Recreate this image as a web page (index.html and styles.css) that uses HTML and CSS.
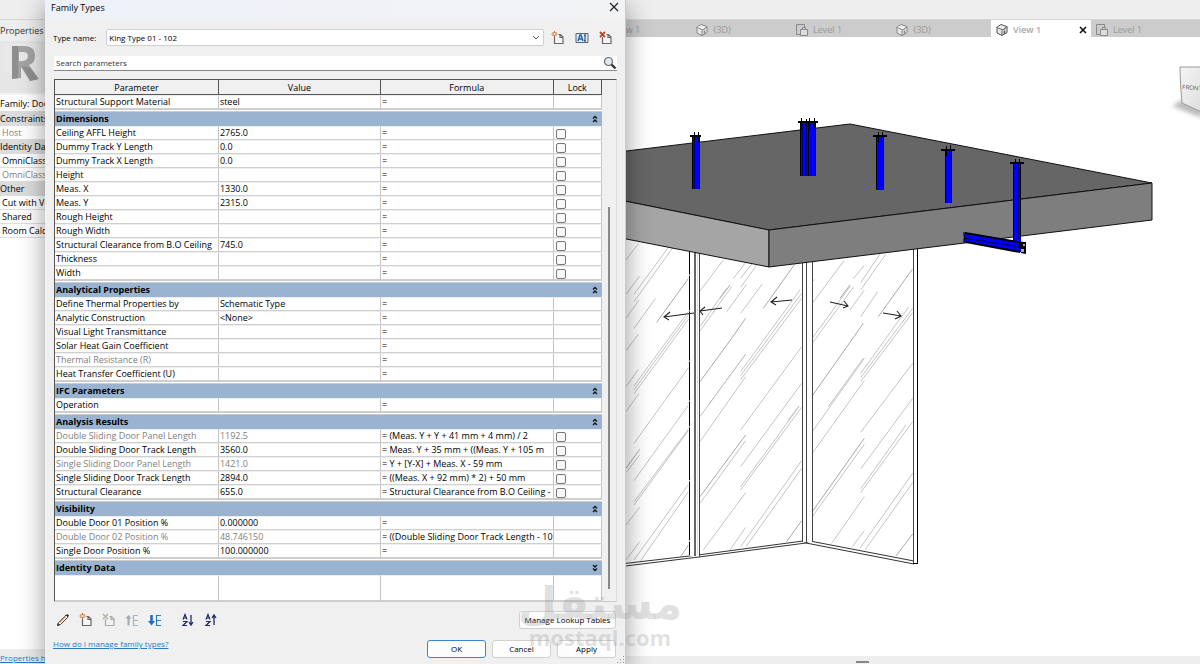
FILE: index.html
```html
<!DOCTYPE html>
<html lang="en">
<head>
<meta charset="utf-8">
<title>Family Types</title>
<link rel="stylesheet" href="styles.css">
</head>
<body>
<svg class="defs" aria-hidden="true">
  <symbol id="up" viewBox="0 0 6 8"><path d="M1 3.5 3 1.5 5 3.5M1 7 3 5 5 7" fill="none" stroke="#111" stroke-width="1.3"/></symbol>
  <symbol id="down" viewBox="0 0 6 8"><path d="M1 1 3 3 5 1M1 4.500 3 6.500 5 4.500" fill="none" stroke="#111" stroke-width="1.3"/></symbol>
  <symbol id="page" viewBox="0 0 14 14"><path d="M3.500 6v6.500h8.500V6L9.500 3.500H7.500M9 3.500V6.500h3" fill="#f6f6f6" stroke="#666" stroke-width="1.2"/></symbol>
  <symbol id="house" viewBox="0 0 14 14"><path d="M1.500 4.500 6 1.500l6 2-4 3.500-6.500-2.500z" fill="#eee" stroke="currentColor"/><path d="M2 5v5l5 2.500V7.500M7 12.500l5-3V3.500L8.500 7" fill="#e8e8e8" stroke="currentColor"/><path d="M9.500 7.500v3.500" stroke="currentColor" stroke-width="1.500"/></symbol>
  <symbol id="plan" viewBox="0 0 14 14"><path d="M1.500 1.500h8v3M1.500 1.500v10h4" fill="none" stroke="currentColor"/><path d="M5.500 6.500h7v6h-7zM7.500 6.500V4.500h3v2" fill="#ddd" stroke="currentColor"/></symbol>
</svg>
<div class="app">
  <header class="ribbon"></header>
  <div class="work">
    <aside class="props">
      <h2 class="props-title">Properties</h2>
      <div class="preview">
        <svg width="48" height="44" viewBox="0 0 48 44" aria-hidden="true"><path d="M4 0h36v28H4z" fill="#e9e9e9"/><path fill-rule="evenodd" d="M12 2h12q11 0 11 10 0 7-6 9l10 14-9 2-9-14v11l-9 1zM19 8v9q9 1 9-5 0-4-5-4z" fill="#a3a3a3"/><path d="M12 2h6v32l-6 1zM22 22l8 15 8-2-8-11z" fill="#8f8f8f"/></svg>
      </div>
      <div class="p-row p-family">Family: Door</div>
      <div class="p-row p-head">Constraints</div>
      <div class="p-row p-item muted">Host</div>
      <div class="p-row p-head">Identity Data</div>
      <div class="p-row p-item">OmniClass Number</div>
      <div class="p-row p-item muted">OmniClass Title</div>
      <div class="p-row p-head">Other</div>
      <div class="p-row p-item">Cut with Voids</div>
      <div class="p-row p-item">Shared</div>
      <div class="p-row p-item">Room Calculation</div>
      <div class="p-space"></div>
      <div class="p-help"><a href="#">Properties help</a></div>
    </aside>
    <main class="view">
      <nav class="tabs">
        <a class="tab" href="#"><svg class="i14"><use href="#house"/></svg>View 1</a>
        <a class="tab" href="#"><svg class="i14"><use href="#house"/></svg>{3D}</a>
        <a class="tab" href="#"><svg class="i14"><use href="#plan"/></svg>Level 1</a>
        <a class="tab" href="#"><svg class="i14"><use href="#house"/></svg>{3D}</a>
        <div class="tab active"><svg class="i14"><use href="#house"/></svg>View 1<button class="tab-x" aria-label="Close view"><svg width="8" height="8" viewBox="0 0 8 8"><path d="M1 1l6 6M7 1 1 7" stroke="#111" stroke-width="1.600"/></svg></button></div>
        <a class="tab" href="#"><svg class="i14"><use href="#plan"/></svg>Level 1</a>
      </nav>
      <svg class="scene" viewBox="91 37 1109 619" role="img" aria-label="3D view of sliding doors below a slab">
        <g class="hatch" transform="translate(620 230) scale(.3333)">
          <path d="M18 90 56 40M18 193 59 138M42 193 143 55M42 215 157 55M18 265 57 210M42 295 106 206M18 362 56 312M18 470 56 418M42 468 205 245M42 480 205 256M42 492 205 268"/>
          <path d="M240 183 310 90M240 290 320 175M240 303 335 170M340 146 375 100M362 145 397 100M362 172 410 106M320 245 380 163M362 250 427 162M265 525 377 373M362 425 540 180M362 437 545 190M362 449 545 205M505 570 537 528"/>
          <path d="M577 220 672 92M577 325 690 170M577 340 700 172M700 146 733 106M722 158 780 72M722 180 798 72M690 240 733 180M722 260 773 185M625 530 730 385M722 430 865 232M722 443 878 235M722 455 878 248M577 155 583 148"/>
          <path class="dark" d="M110 277 205 146M430 235 524 103M240 455 335 325M335 325 377 265M775 260 877 118M577 497 695 330M695 330 730 280M300 205 330 165M660 205 690 165"/>
        </g>
        <g class="hatch" transform="translate(620 400) scale(.3333)">
          <path d="M42 130 205-96M42 242 205 16M18 35 57-20M18 218 59 165M42 305 205 88M42 315 205 92M18 375 59 322M18 480 59 425M42 480 205 254M62 482 205 276"/>
          <path d="M240 50 377-138M240 125 377-70M362 90 545-160M362 200 545-50M362 260 537 20M362 270 545 22M240 310 377 122M250 450 377 278M330 450 377 382M362 440 545 182M378 440 545 205"/>
          <path d="M577 95 733-125M577 160 733-58M722 97 878-110M722 207 878-5M722 267 858 75M722 278 878 65M577 350 733 133M635 430 733 290M697 440 733 392M720 445 878 220M735 450 878 248"/>
          <path class="dark" d="M18 205 59 148M182 470 205 436M240 290 377 105M500 425 545 362M577 335 733 115M828 468 878 402"/>
        </g>
        <g fill="#fff" stroke="#333">
          <path d="M560 571 698 555 803 541 806 543 699 557 560 574z"/>
          <path d="M810 541 914 561 914 564 806 543z"/>
        </g>
        <g shape-rendering="crispEdges">
          <path d="M690 245h9v311h-9zM802 245h10v297h-10zM913 240h5v323h-5z" fill="#fff"/>
          <path d="M689.500 245v310" stroke="#000"/>
          <path d="M694.500 245v311" stroke="#666" stroke-width="2"/>
          <path d="M699.500 245v312M802.500 245v297M806.500 245v297M812.500 245v297M913.500 240v323" stroke="#444"/>
          <path d="M697.500 245v310" stroke="#ddd"/>
          <path d="M917.500 240v324" stroke="#000"/>
          <path d="M913 563.500h5" stroke="#000"/>
        </g>
        <path class="seam" d="M687 278 694 270M687 314 694 305M687 364 694 356M687 404 694 396M687 430 694 421M687 484 694 475M687 545 694 534"/>
        <g fill="none" stroke="#222" stroke-width="1.100">
          <path d="M664 317 694 313M670 312 664 317 669 320M700 311 722 308M705 307 700 311 703 315"/>
          <path d="M771 302 792 300M777 297 771 302 776 305M830 302 848 306M844 301 848 306 843 308M883 313 901 316M897 311 901 316 895 319"/>
        </g>
        <g stroke="#111" stroke-linejoin="round">
          <path d="M560 159 850 124 1152 183 769 230 560 188z" fill="#666"/>
          <path d="M560 188 769 230V267L560 226z" fill="#a5a5a5"/>
          <path d="M769 230 1152 183V220L769 267z" fill="#7e7e7e"/>
        </g>
        <g shape-rendering="crispEdges">
          <path d="M692 136h8v53h-8zM800 122h16v54h-16zM876 135h8v55h-8zM945 149h7v54h-7zM1013 163h8v79h-8z" fill="#00f"/>
          <path d="M692.500 135v54M699.500 137v52M800.500 122v54M808.500 122v54M815.500 122v54M876.500 136v53M883.500 136v53M945.500 149v54M951.500 149v54M1013.500 163v78M1020.500 163v74" stroke="#000"/>
          <path d="M694.500 137v52M802.500 122v54M806.500 128v48M811.500 128v48M813.500 124v52M881.500 136v53M949.500 149v54M1018.500 163v76" stroke="#000070"/>
          <path d="M690 136h11M798 122h20M873 136h14M941 150h14M1010 163h14" stroke="#000" stroke-width="2"/>
          <path d="M694.500 132v10M698.500 132v10M801.500 118v12M806.500 119v10M809.500 118v12M814.500 118v10M878.500 132v10M882.500 132v5M946.500 146v10M950.500 145v6M1015.500 159v10M1019.500 159v5" stroke="#000"/>
        </g>
        <path d="M964 233 1024 243 1026 253 964 242z" fill="#00f"/>
        <path d="M965 233 1024 243M966 242 1020 252" stroke="#000" stroke-width="2"/>
        <path d="M964 238 1020 247M964 232v11" stroke="#000" stroke-dasharray="5 1"/>
        <path d="M1019 242h7v12l-5-1z" fill="#000"/>
        <path d="M1021 249h3v3h-3zM1023 244h2v2h-2z" fill="#aaa"/>
        <defs><linearGradient id="cube" x2="1" y2="1"><stop stop-color="#f4f4f4"/><stop offset="1" stop-color="#ddd"/></linearGradient><filter id="soft"><feGaussianBlur stdDeviation="2"/></filter></defs>
        <path d="M1172 106 1202 118V108L1182 100z" fill="#bbb" filter="url(#soft)"/>
        <path d="M1180 67h24v46l-22-10q-2-18-2-36z" fill="url(#cube)" stroke="#999"/>
        <text class="cube-text" x="1182" y="89" transform="rotate(5 1182 89)">FRONT</text>
      </svg>
      <footer class="status"><span class="grab"></span></footer>
    </main>
  </div>

  <section class="dialog" role="dialog" aria-labelledby="dlg-title">
    <header class="titlebar"><h1 id="dlg-title">Family Types</h1>
      <button class="icon-btn" aria-label="Close"><svg width="10" height="10" viewBox="0 0 10 10"><path d="M1 1l8 8M9 1 1 9" stroke="#222" stroke-width="1.200"/></svg></button>
    </header>
    <div class="type-row">
      <label for="type">Type name:</label>
      <div class="select-wrap"><select id="type"><option>King Type 01 - 102</option></select><svg class="caret" width="8" height="5" viewBox="0 0 8 5" aria-hidden="true"><path d="M1 1l3 3 3-3" fill="none" stroke="#555"/></svg></div>
      <div class="type-tools">
        <button class="icon-btn" aria-label="New type"><svg class="i14"><use href="#page"/><g stroke="#c8692b"><path d="M3.500 0v6M.5 3h6M1.500 1l4 4M5.500 1l-4 4"/><circle cx="3.500" cy="3" r="1" fill="#fff" stroke="none"/></g></svg></button>
        <button class="icon-btn" aria-label="Rename type"><svg class="i14" viewBox="0 0 14 14"><path d="M1 2.500h12v9H1z" fill="#dceaf8" stroke="#567"/><path d="M3 10 5 4h1l2 6M4 8h3" fill="none" stroke="#1a62b8" stroke-width="1.400"/><path d="M10 4v6M9 4h2M9 10h2" stroke="#333"/></svg></button>
        <button class="icon-btn" aria-label="Delete type"><svg class="i14"><use href="#page"/><path d="M1 1l5 5M6 1 1 6" stroke="#b9472c" stroke-width="1.800"/></svg></button>
      </div>
    </div>
    <div class="search"><input type="text" placeholder="Search parameters" aria-label="Search parameters">
      <svg width="14" height="14" viewBox="0 0 14 14" aria-hidden="true"><circle cx="5.500" cy="5.500" r="4" fill="#dfeaf0" stroke="#666" stroke-width="1.200"/><path d="M8.500 8.500 12.500 12.500" stroke="#333" stroke-width="2.400"/></svg>
    </div>
    <div class="frame">
      <table class="grid">
        <colgroup><col class="c1"><col class="c2"><col><col class="c4"></colgroup>
        <thead><tr><th>Parameter</th><th>Value</th><th>Formula</th><th>Lock</th></tr></thead>
        <tbody>
          <tr><td>Structural Support Material</td><td>steel</td><td>=</td><td></td></tr>
          <tr class="group"><th colspan="4"><div>Dimensions<button aria-label="Collapse Dimensions"><svg><use href="#up"/></svg></button></div></th></tr>
          <tr><td>Ceiling AFFL Height</td><td>2765.0</td><td>=</td><td><input type="checkbox" aria-label="Lock Ceiling AFFL Height"></td></tr>
          <tr><td>Dummy Track Y Length</td><td>0.0</td><td>=</td><td><input type="checkbox" aria-label="Lock Dummy Track Y Length"></td></tr>
          <tr><td>Dummy Track X Length</td><td>0.0</td><td>=</td><td><input type="checkbox" aria-label="Lock Dummy Track X Length"></td></tr>
          <tr><td>Height</td><td></td><td>=</td><td><input type="checkbox" aria-label="Lock Height"></td></tr>
          <tr><td>Meas. X</td><td>1330.0</td><td>=</td><td><input type="checkbox" aria-label="Lock Meas. X"></td></tr>
          <tr><td>Meas. Y</td><td>2315.0</td><td>=</td><td><input type="checkbox" aria-label="Lock Meas. Y"></td></tr>
          <tr><td>Rough Height</td><td></td><td>=</td><td><input type="checkbox" aria-label="Lock Rough Height"></td></tr>
          <tr><td>Rough Width</td><td></td><td>=</td><td><input type="checkbox" aria-label="Lock Rough Width"></td></tr>
          <tr><td>Structural Clearance from B.O Ceiling</td><td>745.0</td><td>=</td><td><input type="checkbox" aria-label="Lock Structural Clearance from B.O Ceiling"></td></tr>
          <tr><td>Thickness</td><td></td><td>=</td><td><input type="checkbox" aria-label="Lock Thickness"></td></tr>
          <tr><td>Width</td><td></td><td>=</td><td><input type="checkbox" aria-label="Lock Width"></td></tr>
          <tr class="group"><th colspan="4"><div>Analytical Properties<button aria-label="Collapse Analytical Properties"><svg><use href="#up"/></svg></button></div></th></tr>
          <tr><td>Define Thermal Properties by</td><td>Schematic Type</td><td>=</td><td></td></tr>
          <tr><td>Analytic Construction</td><td>&lt;None&gt;</td><td>=</td><td></td></tr>
          <tr><td>Visual Light Transmittance</td><td></td><td>=</td><td></td></tr>
          <tr><td>Solar Heat Gain Coefficient</td><td></td><td>=</td><td></td></tr>
          <tr><td class="muted">Thermal Resistance (R)</td><td></td><td>=</td><td></td></tr>
          <tr><td>Heat Transfer Coefficient (U)</td><td></td><td>=</td><td></td></tr>
          <tr class="group"><th colspan="4"><div>IFC Parameters<button aria-label="Collapse IFC Parameters"><svg><use href="#up"/></svg></button></div></th></tr>
          <tr><td>Operation</td><td></td><td>=</td><td></td></tr>
          <tr class="group"><th colspan="4"><div>Analysis Results<button aria-label="Collapse Analysis Results"><svg><use href="#up"/></svg></button></div></th></tr>
          <tr><td class="muted">Double Sliding Door Panel Length</td><td class="muted">1192.5</td><td>= (Meas. Y + Y + 41 mm + 4 mm) / 2</td><td><input type="checkbox" aria-label="Lock Double Sliding Door Panel Length"></td></tr>
          <tr><td>Double Sliding Door Track Length</td><td>3560.0</td><td>= Meas. Y + 35 mm + ((Meas. Y + 105 m</td><td><input type="checkbox" aria-label="Lock Double Sliding Door Track Length"></td></tr>
          <tr><td class="muted">Single Sliding Door Panel Length</td><td class="muted">1421.0</td><td>= Y + [Y-X] + Meas. X - 59 mm</td><td><input type="checkbox" aria-label="Lock Single Sliding Door Panel Length"></td></tr>
          <tr><td>Single Sliding Door Track Length</td><td>2894.0</td><td>= ((Meas. X + 92 mm) * 2) + 50 mm</td><td><input type="checkbox" aria-label="Lock Single Sliding Door Track Length"></td></tr>
          <tr><td>Structural Clearance</td><td>655.0</td><td>= Structural Clearance from B.O Ceiling -</td><td><input type="checkbox" aria-label="Lock Structural Clearance"></td></tr>
          <tr class="group"><th colspan="4"><div>Visibility<button aria-label="Collapse Visibility"><svg><use href="#up"/></svg></button></div></th></tr>
          <tr><td>Double Door 01 Position %</td><td>0.000000</td><td>=</td><td></td></tr>
          <tr><td class="muted">Double Door 02 Position %</td><td class="muted">48.746150</td><td>= ((Double Sliding Door Track Length - 10</td><td></td></tr>
          <tr><td>Single Door Position %</td><td>100.000000</td><td>=</td><td></td></tr>
          <tr class="group"><th colspan="4"><div>Identity Data<button aria-label="Expand Identity Data"><svg><use href="#down"/></svg></button></div></th></tr>
          <tr class="blank"><td></td><td></td><td></td><td></td></tr>
        </tbody>
      </table>
      <div class="scroll"><div class="thumb"></div></div>
    </div>
    <div class="tools">
      <button class="icon-btn" aria-label="Edit parameter"><svg class="i14" viewBox="0 0 14 14"><path d="M1.500 12.500 2.500 9.500 10 2l2 2-7.500 7.500z" fill="#fff" stroke="#444"/><path d="M3.500 9.500 9.500 3.500" stroke="#d98a4e" stroke-width="1.500"/><path d="M1 13l1-3 2 2zM10 2l2 2 1-1.500L11.500 1z" fill="#333"/></svg></button>
      <button class="icon-btn" aria-label="New parameter"><svg class="i14"><use href="#page"/><g stroke="#c8692b"><path d="M3.500 0v6M.5 3h6M1.500 1l4 4M5.500 1l-4 4"/><circle cx="3.500" cy="3" r="1" fill="#fff" stroke="none"/></g></svg></button>
      <button class="icon-btn faded" aria-label="Delete parameter"><svg class="i14"><use href="#page"/><path d="M1 1l5 5M6 1 1 6" stroke="#875" stroke-width="1.600"/></svg></button>
      <button class="icon-btn faded" aria-label="Move up"><svg class="i14" viewBox="0 0 14 14"><path d="M3.500 12.500V4" stroke="#567" stroke-width="2"/><path d="M.5 5.500 3.500 2l3 3.500z" fill="#567"/><path d="M13 2.500H8.500v10H13M8.500 7.500H13" fill="none" stroke="#48a" stroke-width="1.200"/></svg></button>
      <button class="icon-btn" aria-label="Move down"><svg class="i14" viewBox="0 0 14 14"><path d="M3.500 2v7" stroke="#2a6db5" stroke-width="2.600"/><path d="M0 8h7L3.500 12.500z" fill="#2a6db5"/><path d="M13 2.500H8.500v10H13M8.500 7.500H13" fill="none" stroke="#2f7dca" stroke-width="1.200"/></svg></button>
      <button class="icon-btn sort" aria-label="Sort ascending"><svg class="i14" viewBox="0 0 14 14"><path d="M2 6.500 4 1.500l2 5M2.500 5h3M2 8.500h4l-4 4h4" fill="none" stroke="#1d2b66" stroke-width="1.200"/><path d="M10 2v9M8 9l2 3 2-3" fill="none" stroke="#1d2b66" stroke-width="1.300"/></svg></button>
      <button class="icon-btn" aria-label="Sort descending"><svg class="i14" viewBox="0 0 14 14"><path d="M2 6.500 4 1.500l2 5M2.500 5h3M2 8.500h4l-4 4h4" fill="none" stroke="#1d2b66" stroke-width="1.200"/><path d="M10 12V3M8 5l2-3 2 3" fill="none" stroke="#1d2b66" stroke-width="1.300"/></svg></button>
      <button class="btn lookup">Manage Lookup Tables</button>
    </div>
    <footer class="actions">
      <a href="#">How do I manage family types?</a>
      <button class="btn primary">OK</button>
      <button class="btn">Cancel</button>
      <button class="btn">Apply</button>
    </footer>
    <svg class="grip" width="8" height="8" viewBox="0 0 8 8" aria-hidden="true"><path d="M6 0h1v1H6zM3 3h1v1H3zM6 3h1v1H6zM0 6h1v1H0zM3 6h1v1H3zM6 6h1v1H6z" fill="#999"/></svg>
  </section>
  <div class="mark" aria-hidden="true"><span class="mark-ar" lang="ar" dir="rtl">مستقل</span><span class="mark-en">mostaql.com</span></div>
</div>
</body>
</html>
```
FILE: styles.css
```css
* { box-sizing: border-box; }
body { margin: 0; font: 9px/14px "Open Sans", "Noto Sans", sans-serif; color: #000; }
h1, h2 { margin: 0; font: inherit; }
button, input, select { font: inherit; color: inherit; margin: 0; padding: 0; }
a { color: #2a7ac6; }
.defs { position: absolute; width: 0; height: 0; }
.i14 { width: 14px; height: 14px; flex: none; display: block; }
.muted { color: #808080; }

.app { position: relative; display: flex; flex-direction: column; height: 100vh; overflow: hidden; background: #eee; }
.ribbon { height: 20px; background: #eee; border-bottom: 1px solid #d4d4d4; flex: none; }
.work { flex: 1; display: flex; min-height: 0; }

.props { width: 91px; flex: none; display: flex; flex-direction: column; background: #eee; white-space: nowrap; overflow: hidden; }
.props-title { height: 21px; line-height: 21px; color: #333; }
.preview { height: 54px; padding-top: 3px; background: #e6e6e6; border-bottom: 2px solid #f4f4f4; }
.p-row { height: 14px; line-height: 14px; background: #fff; border-bottom: 1px solid #ddd; }
.p-family { height: 17px; line-height: 17px; }
.p-head { background: #dcdcdc; }
.p-item { padding-left: 2px; }
.p-space { flex: 1; background: #fff; }
.p-help { height: 15px; line-height: 18px; font-size: 8px; background: #ececec; }

.view { flex: 1; min-width: 0; display: flex; flex-direction: column; background: #fff; }
.tabs { display: flex; height: 17px; padding-left: 500px; background: #ccc; flex: none; }
.tab { display: flex; align-items: center; gap: 4px; width: 100px; flex: none; padding: 2px 4px 0; color: #999; text-decoration: none; }
.tab .i14 { color: #888; }
.tab.active { background: #fff; font-weight: 600; color: #aaa; }
.tab.active .i14 { color: #555; }
.tab-x { margin-left: auto; border: 0; background: none; display: flex; }
.scene { flex: 1; min-height: 0; width: 100%; }
.hatch { fill: none; stroke: #c4c4c4; stroke-width: 3; }
.dark { stroke: #a8a8a8; }
.seam { fill: none; stroke: #eee; }
.cube-text { font: 6px Lato, sans-serif; fill: #666; }
.status { display: flex; height: 8px; flex: none; background: #eee; }
.grab { width: 13px; height: 2px; margin: 5px 0 0 765px; background: #888; }

.dialog { position: absolute; top: 0; bottom: 0; left: 45px; width: 581px; display: flex; flex-direction: column; background: #f0f0f0; border-right: 1px solid #ccc; box-shadow: 0 6px 24px rgba(0, 0, 0, .4); }
.titlebar { display: flex; justify-content: space-between; align-items: flex-start; height: 19px; padding: 0 6px; line-height: 15px; background: linear-gradient(90deg, #edf1f9, #f2f3f5); }
.titlebar .icon-btn { height: 14px; }
.icon-btn { display: flex; align-items: center; justify-content: center; border: 0; background: none; }
.type-row { display: flex; align-items: center; height: 37px; padding: 0 12px 0 8px; gap: 7px; font-size: 8px; }
.type-row label { margin-right: 3px; }
.type-tools { display: flex; gap: 10px; }
.type-row .icon-btn { width: 14px; }
.select-wrap { position: relative; flex: 1; }
#type { display: block; appearance: none; width: 100%; height: 17px; padding: 0 2px; background: #fff; border: 1px solid #d0d0d0; border-radius: 2px; }
.caret { position: absolute; right: 4px; top: 6px; pointer-events: none; }
.search { display: flex; align-items: center; height: 15px; margin: 0 8px 8px 9px; background: #fff; border-bottom: 1px solid #888; font-size: 8px; }
.search input { flex: 1; min-width: 0; border: 0; background: none; padding-left: 2px; outline: 0; }
.search input::placeholder { color: #333; opacity: 1; }

.frame { display: flex; margin: 0 8px 0 9px; border-top: 1px solid #555; border-right: 1px solid #ddd; border-bottom: 1px solid #ccc; }
.grid { flex: 1; min-width: 0; table-layout: fixed; border-collapse: separate; border-spacing: 0; border-left: 1px solid #555; background: #fff; }
.c1, .c2 { width: 164px; }
.c4 { width: 49px; }
.grid thead th { height: 15px; padding: 0; line-height: 13px; font-weight: normal; background: #f0f0f0; border-right: 1px solid #555; border-bottom: 1px solid #555; }
.grid td { height: 14px; padding: 0 0 0 1px; line-height: 12px; white-space: nowrap; overflow: hidden; border-right: 1px solid #c4c4c4; border-top: 1px solid #eee; border-bottom: 1px solid #d0d0d0; }
.grid td:last-child { padding-left: 2px; }
.grid input { display: block; appearance: none; width: 10px; height: 10px; margin-top: 1px; background: #f8f8f8; border: 1px solid #777; border-radius: 2px; }
.group th { height: 17px; padding: 0; line-height: 14px; text-align: left; background: #9ab3d1; background-clip: padding-box; border-top: 3px double #ccc; }
.group div { display: flex; justify-content: space-between; padding: 0 4px 0 1px; }
.group button { display: flex; align-items: center; border: 0; background: none; }
.group svg { width: 6px; height: 8px; }
.grid .blank td { height: 26px; }
.scroll { width: 14px; flex: none; display: flex; flex-direction: column; align-items: center; padding: 127px 0 12px; }
.thumb { flex: 1; width: 2px; background: #888; }

.tools { display: flex; align-items: center; gap: 9px; height: 35px; padding: 0 9px 0 11px; }
.tools .icon-btn { width: 14px; }
.tools .sort { margin-left: 10px; }
.faded { opacity: .5; }
.btn { height: 18px; width: 59px; font-size: 8px; white-space: nowrap; background: #fdfdfd; border: 1px solid #d0d0d0; border-radius: 3px; }
.tools .lookup { width: 97px; margin-left: auto; }
.primary { border-color: #3a86cc; }
.actions { display: flex; align-items: center; gap: 6px; height: 23px; padding: 0 9px 0 8px; }
.actions a { margin-right: auto; align-self: flex-start; font-size: 8px; }
.grip { position: absolute; right: 0; bottom: 0; }

.mark { position: absolute; left: 527px; top: 582px; display: flex; flex-direction: column; align-items: center; width: 146px; color: rgba(150, 150, 150, .28); pointer-events: none; white-space: nowrap; }
.mark-ar { font: bold 45px/43px "DejaVu Sans", sans-serif; }
.mark-en { font: bold 22px/24px "Open Sans", sans-serif; }
```
